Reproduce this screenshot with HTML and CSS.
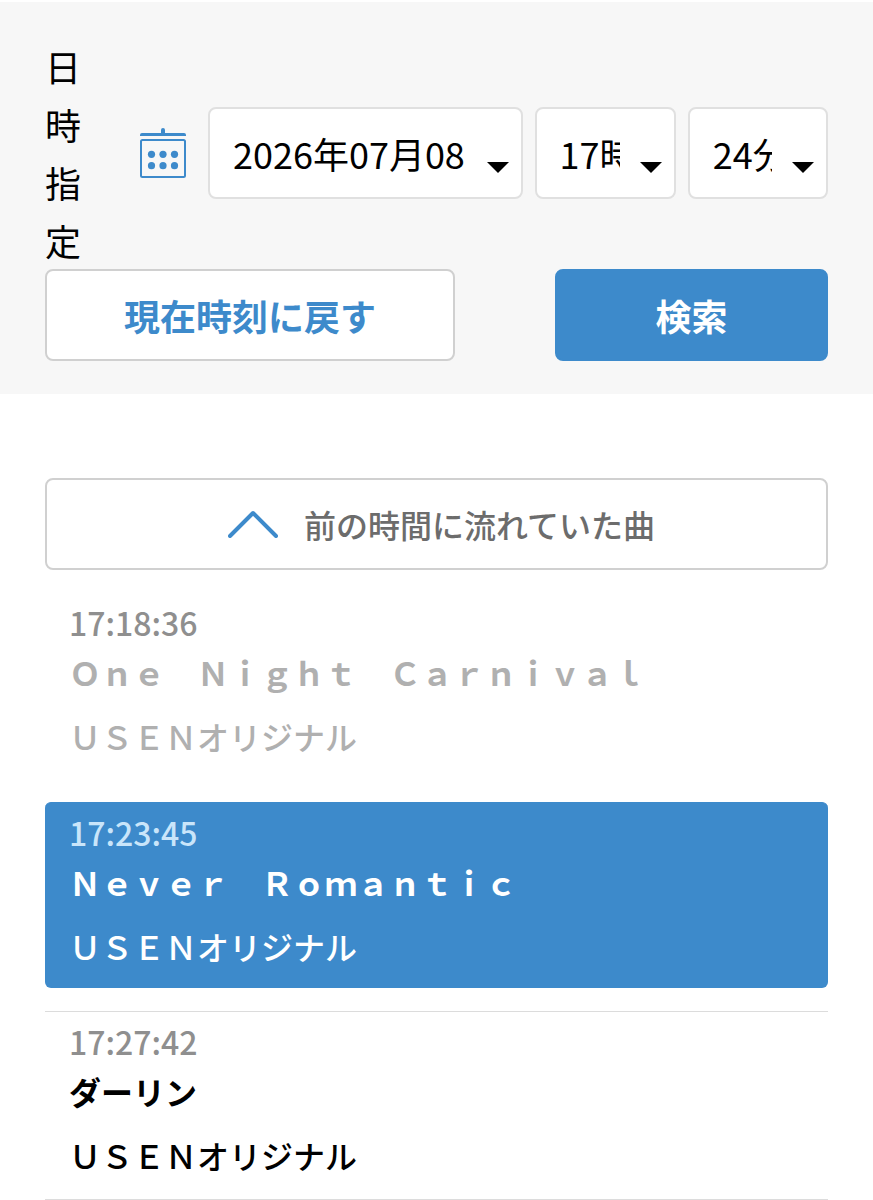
FILE: index.html
```html
<!DOCTYPE html>
<html lang="ja">
<head>
<meta charset="utf-8">
<meta name="viewport" content="width=device-width, initial-scale=1">
<title>楽曲検索</title>
<link rel="stylesheet" href="styles.css">
</head>
<body>
<form class="search">
  <div class="datetime">
    <label class="datetime-label" for="date">日時指定</label>
    <svg class="calendar" viewBox="0 0 46 50" aria-hidden="true">
      <path d="M0 8V7q0-2 2-2h19V2q0-2 2-2t2 2v3h19q2 0 2 2v1z" fill="#3d8acb"/>
      <rect x="1" y="12" width="44" height="37" rx="1.5" fill="none" stroke="#3d8acb" stroke-width="2"/>
      <g fill="#3d8acb">
        <circle cx="11.5" cy="26.3" r="3.6"/><circle cx="23" cy="26.3" r="3.6"/><circle cx="34.5" cy="26.3" r="3.6"/>
        <circle cx="11.5" cy="37.7" r="3.6"/><circle cx="23" cy="37.7" r="3.6"/><circle cx="34.5" cy="37.7" r="3.6"/>
      </g>
    </svg>
    <div class="selects">
      <div class="select-box"><select class="select" id="date"><option>2026年07月08日</option></select><svg class="arrow" viewBox="0 0 22 11" aria-hidden="true"><path d="M0 0h22L11 11z"/></svg></div>
      <div class="select-box"><select class="select" aria-label="時"><option>17時</option></select><svg class="arrow" viewBox="0 0 22 11" aria-hidden="true"><path d="M0 0h22L11 11z"/></svg></div>
      <div class="select-box"><select class="select" aria-label="分"><option>24分</option></select><svg class="arrow" viewBox="0 0 22 11" aria-hidden="true"><path d="M0 0h22L11 11z"/></svg></div>
    </div>
  </div>
  <div class="actions">
    <button class="button reset" type="button">現在時刻に戻す</button>
    <button class="button submit" type="button">検索</button>
  </div>
</form>
<main class="results">
  <button class="button previous" type="button">
    <svg class="chevron" viewBox="0 0 50 28" aria-hidden="true"><path d="M2 26L25 3l23 23" fill="none" stroke="#3d8acb" stroke-width="4" stroke-linecap="round" stroke-linejoin="round"/></svg>
    <span>前の時間に流れていた曲</span>
  </button>
  <ul class="songs">
    <li class="song past">
      <time class="time">17:18:36</time>
      <p class="title">Ｏｎｅ　Ｎｉｇｈｔ　Ｃａｒｎｉｖａｌ</p>
      <p class="artist">ＵＳＥＮオリジナル</p>
    </li>
    <li class="song current">
      <time class="time">17:23:45</time>
      <p class="title">Ｎｅｖｅｒ　Ｒｏｍａｎｔｉｃ</p>
      <p class="artist">ＵＳＥＮオリジナル</p>
    </li>
    <li class="song">
      <time class="time">17:27:42</time>
      <p class="title">ダーリン</p>
      <p class="artist">ＵＳＥＮオリジナル</p>
    </li>
  </ul>
</main>
</body>
</html>
```
FILE: styles.css
```css
* { box-sizing: border-box; }

body {
  margin: 0;
  padding-top: 2px;
  background: #fff;
  color: #000;
  font-family: "Noto Sans CJK JP", sans-serif;
}

button, select { font-family: inherit; }

.search {
  padding: 35px 45px 33px;
  background: #f7f7f7;
}

.datetime {
  display: flex;
  align-items: center;
}

.datetime-label {
  flex: none;
  width: 36px;
  font-size: 36px;
  line-height: 58px;
}

.calendar {
  flex: none;
  width: 46px;
  height: 50px;
  margin: 0 22px 0 59px;
}

.selects {
  flex: 1;
  display: grid;
  grid-template-columns: 314fr 141fr 140fr;
  gap: 12px;
}

.select-box {
  position: relative;
  min-width: 0;
}

.select {
  display: block;
  width: 100%;
  height: 92px;
  padding: 0 54px 0 23px;
  border: 2px solid #e0e0e0;
  border-radius: 8px;
  background: #fff;
  color: #000;
  font-size: 36px;
  appearance: none;
}

.arrow {
  position: absolute;
  right: 14px;
  bottom: 26px;
  width: 22px;
  height: 11px;
  pointer-events: none;
}

.actions {
  display: flex;
  justify-content: space-between;
}

.button {
  height: 92px;
  padding: 0;
  border: 2px solid #d0d0d0;
  border-radius: 8px;
  background: #fff;
  font-size: 36px;
  font-weight: 700;
}

.reset {
  width: 410px;
  color: #3d8acb;
}

.submit {
  width: 273px;
  border-color: #3d8acb;
  background: #3d8acb;
  color: #fff;
}

.results { padding: 84px 45px 0; }

.previous {
  display: flex;
  align-items: center;
  justify-content: center;
  gap: 26px;
  width: 100%;
  padding: 0 0 0 10px;
  color: #6c6c6c;
  font-size: 32px;
  font-weight: 500;
}

.chevron {
  width: 50px;
  height: 28px;
}

.songs {
  margin: 22px 0 0;
  padding: 0;
  border-bottom: 1px solid #dcdcdc;
  list-style: none;
}

.song {
  padding: 4px 24px 15px;
  border-top: 1px solid #dcdcdc;
  font-size: 32px;
}

.time {
  display: block;
  color: #8f8f8f;
  font-weight: 500;
  line-height: 50px;
}

.title {
  margin: 0;
  font-weight: 700;
  line-height: 50px;
}

.artist {
  margin: 10px 0 0;
  font-weight: 500;
  line-height: 58px;
}

.past {
  border-color: transparent;
  color: #b0b0b0;
}

.current {
  margin: 22px 0 23px;
  padding-bottom: 13px;
  border-color: #3d8acb;
  border-radius: 6px;
  background: #3d8acb;
  color: #fff;
}

.current .time { color: #c9e5fa; }
```
